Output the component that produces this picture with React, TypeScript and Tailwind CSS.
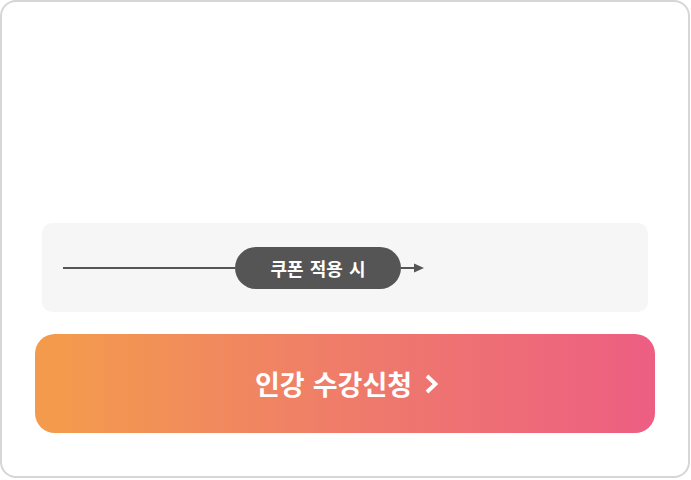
import React from "react";

export default function App() {
  return (
    <div className="w-[691px] h-[480px] bg-white" style={{ fontFamily: '"Noto Sans CJK KR", "Noto Sans", sans-serif' }}>
      <div className="w-[690px] h-[478px] border-2 border-[#d6d6d6] rounded-[16px] flex flex-col justify-end items-center pb-[43px]">
        <div className="w-[606px] h-[89px] bg-[#f6f6f6] rounded-[10px] flex items-center pl-[21px]">
          <div className="w-[172px] h-[2px] bg-[#555555]" />
          <div className="w-[166px] h-[42px] rounded-full bg-[#555555] flex items-center justify-center text-white font-bold text-[18px] leading-none [word-spacing:2px]">
            쿠폰 적용 시
          </div>
          <div className="w-[14px] h-[2px] bg-[#555555]" />
          <svg width="10" height="10" viewBox="0 0 10 10" className="-ml-[1px]">
            <path d="M0 0.5 L10 5 L0 9.5 Z" fill="#555555" />
          </svg>
        </div>
        <div className="mt-[22px] w-[620px] h-[99px] rounded-[20px] bg-[linear-gradient(90deg,#f39a4c_0%,#f39a4e_5%,#ef7c6a_50%,#ed5e83_100%)] flex items-center justify-center gap-[12px] pl-[4px]">
          <span className="text-white font-bold text-[27px] leading-none [word-spacing:2px]">인강 수강신청</span>
          <svg width="15" height="20" viewBox="0 0 15 20">
            <path d="M3 2 L11.5 10 L3 18" fill="none" stroke="white" strokeWidth="3.8" strokeLinecap="butt" strokeLinejoin="miter" />
          </svg>
        </div>
      </div>
    </div>
  );
}
